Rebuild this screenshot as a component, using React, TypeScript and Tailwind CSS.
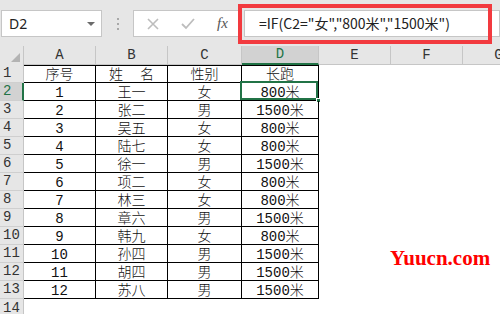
import React from "react";

const rows: [string, string, string, string][] = [
  ["序号", "姓\u00a0\u00a0名", "性别", "长跑"],
  ["1", "王一", "女", "800米"],
  ["2", "张二", "男", "1500米"],
  ["3", "吴五", "女", "800米"],
  ["4", "陆七", "女", "800米"],
  ["5", "徐一", "男", "1500米"],
  ["6", "项二", "女", "800米"],
  ["7", "林三", "女", "800米"],
  ["8", "章六", "男", "1500米"],
  ["9", "韩九", "女", "800米"],
  ["10", "孙四", "男", "1500米"],
  ["11", "胡四", "男", "1500米"],
  ["12", "苏八", "男", "1500米"],
];

const cellFont = { fontFamily: '"Liberation Mono", "Noto Sans CJK SC", monospace' };

function Toolbar() {
  return (
    <div className="relative flex h-[46px] items-start bg-[#e6e6e6] pt-[10px]">
      <div className="ml-[1px] flex h-[27px] w-[101px] items-center justify-between border border-[#c6c6c6] bg-white pl-[7px] pr-[6px]">
        <span className="text-[14px] text-[#222]" style={{ fontFamily: '"Noto Sans", sans-serif' }}>
          D2
        </span>
        <span className="h-0 w-0 border-x-[4px] border-t-[4px] border-x-transparent border-t-[#6b6b6b]" />
      </div>
      <div className="flex w-[31px] flex-col items-center gap-[3px] pt-[8px]">
        <span className="h-[2px] w-[2px] bg-[#a8a8a8]" />
        <span className="h-[2px] w-[2px] bg-[#a8a8a8]" />
        <span className="h-[2px] w-[2px] bg-[#a8a8a8]" />
      </div>
      <div className="flex h-[27px] w-[108px] items-center border border-[#c6c6c6] bg-white">
        <svg width="12" height="12" viewBox="0 0 12 12" className="ml-[13px]">
          <path d="M1 1 L11 11 M11 1 L1 11" stroke="#bdbdbd" strokeWidth="1.6" />
        </svg>
        <svg width="14" height="12" viewBox="0 0 14 12" className="ml-[22px]">
          <path d="M1 6 L5 10 L13 1" stroke="#bdbdbd" strokeWidth="1.8" fill="none" />
        </svg>
        <span
          className="ml-[22px] text-[15px] italic text-[#555]"
          style={{ fontFamily: '"Liberation Serif", serif' }}
        >
          fx
        </span>
      </div>
      <div className="ml-[3px] flex h-[27px] flex-1 items-center border border-[#c6c6c6] bg-white pl-[14px]">
        <span className="text-[14px] text-[#222]" style={{ fontFamily: '"Noto Sans CJK SC", sans-serif' }}>
          =IF(C2="女","800米","1500米")
        </span>
      </div>
      <div className="absolute left-[238px] top-[4px] h-[40px] w-[254px] border-4 border-[#f23a3f]" />
    </div>
  );
}

const widths = ["w-[72px]", "w-[72px]", "w-[74px]", "w-[77px]"];

function ColumnHeader() {
  const cols = [
    { l: "A", w: "w-[72px]" },
    { l: "B", w: "w-[72px]" },
    { l: "C", w: "w-[74px]" },
    { l: "D", w: "w-[77px]" },
    { l: "E", w: "w-[72px]" },
    { l: "F", w: "w-[72px]" },
    { l: "G", w: "w-[72px]" },
  ];
  return (
    <div className="flex h-[19px] bg-[#e6e6e6] text-[14px]" style={cellFont}>
      <div className="relative w-[24px] shrink-0 border-r border-[#c6c6c6]">
        <span className="absolute bottom-[3px] right-[3px] h-0 w-0 border-b-[9px] border-l-[9px] border-b-[#b3b3b3] border-l-transparent" />
      </div>
      {cols.map((c) =>
        c.l === "D" ? (
          <div
            key={c.l}
            className={`${c.w} flex shrink-0 items-center justify-center border-b-2 border-r border-b-[#217346] border-r-[#c6c6c6] bg-[#d2d2d2] text-[#217346]`}
          >
            {c.l}
          </div>
        ) : (
          <div key={c.l} className={`${c.w} flex shrink-0 items-center justify-center border-b border-r border-[#c6c6c6] text-[#333]`}>
            {c.l}
          </div>
        )
      )}
    </div>
  );
}

export default function App() {
  return (
    <div className="relative h-[314px] w-[500px] overflow-hidden bg-white">
      <Toolbar />
      <ColumnHeader />
      <div style={cellFont} className="text-[14px] font-light text-[#111]">
        {rows.map((r, i) => {
          const sel = i === 1;
          return (
            <div key={i} className="flex h-[18px]">
              <div
                className={`flex w-[24px] shrink-0 items-center border-b border-[#cfcfcf] pl-[3px] text-[14px] ${
                  sel ? "border-r-2 border-r-[#217346] bg-[#d2d2d2] text-[#217346]" : "border-r border-r-[#c6c6c6] bg-[#e6e6e6] text-[#333]"
                }`}
              >
                {i + 1}
              </div>
              {r.map((v, j) => (
                <div
                  key={j}
                  className={`${widths[j]} relative flex shrink-0 items-center justify-center border-b border-r border-black pt-[2px] leading-none ${
                    i === 0 ? "border-t" : ""
                  }`}
                >
                  {v}
                  {sel && j === 3 && (
                    <>
                      <span className="absolute -left-[2px] -top-[2px] h-[19px] w-[78px] border-2 border-[#217346]" />
                      <span className="absolute -bottom-[3px] -right-[3px] h-[5px] w-[5px] border border-white bg-[#217346]" />
                    </>
                  )}
                </div>
              ))}
            </div>
          );
        })}
        <div className="flex h-[18px]">
          <div className="flex w-[24px] shrink-0 items-center border-r border-[#c6c6c6] bg-[#e6e6e6] pl-[3px] text-[14px] text-[#333]">
            14
          </div>
        </div>
      </div>
      <div
        className="absolute left-[390px] top-[248px] text-[21px] font-bold leading-none text-[#ff0000]"
        style={{ fontFamily: '"Liberation Serif", serif' }}
      >
        Yuucn.com
      </div>
    </div>
  );
}
